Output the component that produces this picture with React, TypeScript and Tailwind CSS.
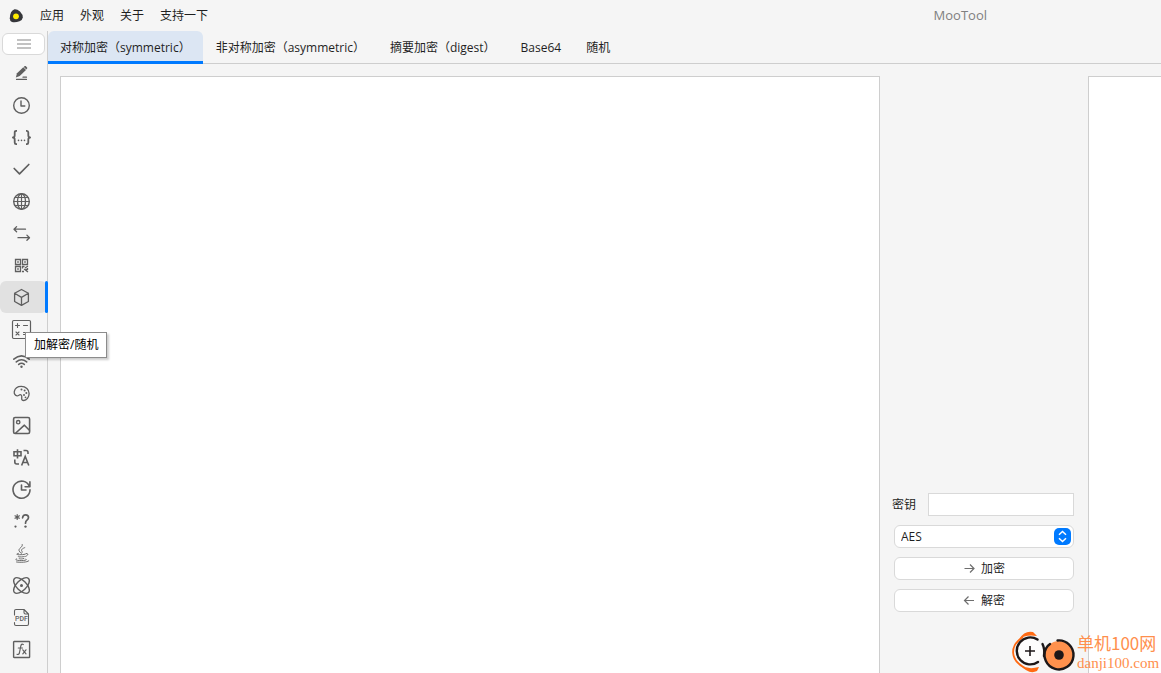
import React, { useState } from 'react';

type Tool = {
  id: string;
  label: string;
  icon: React.ReactNode;
};

const Icon: React.FC<{ children: React.ReactNode }> = ({ children }) => (
  <svg
    viewBox="0 0 20 20"
    className="size-5 overflow-visible"
    fill="none"
    stroke="currentColor"
    strokeWidth={1.4}
    strokeLinecap="round"
    strokeLinejoin="round"
    aria-hidden="true"
  >
    {children}
  </svg>
);

const tools: Tool[] = [
  {
    id: 'note',
    label: '随手记',
    icon: (
      <Icon>
        <path d="M4.8 14.4l1.2-4.1 6.3-6 2.7 2.8-6.3 6z" fill="currentColor" stroke="none" />
        <path d="M12.8 3.9l.9-.8q.5-.4 1 0l1.4 1.5q.4.5 0 1l-.8.8z" fill="currentColor" stroke="none" />
        <path d="M5.5 16.4h10M12 14.2h3.5" strokeWidth={1.2} />
      </Icon>
    ),
  },
  {
    id: 'time',
    label: '时间转换',
    icon: (
      <Icon>
        <circle cx="10.5" cy="10.5" r="7.8" />
        <path d="M10 6v5h3.8" />
      </Icon>
    ),
  },
  {
    id: 'json',
    label: 'JSON格式化',
    icon: (
      <Icon>
        <path
          d="M6 3.8H5.2q-1.5 0-1.5 1.6v2.9q0 2.2-1.8 2.2 1.8 0 1.8 2.2v2.9q0 1.6 1.5 1.6H6M15 3.8h.8q1.5 0 1.5 1.6v2.9q0 2.2 1.8 2.2-1.8 0-1.8 2.2v2.9q0 1.6-1.5 1.6H15"
          strokeWidth={1.8}
          strokeLinecap="butt"
        />
        <path d="M7.5 13.4h0M10.5 13.4h0M13.5 13.4h0" strokeWidth={1.6} />
      </Icon>
    ),
  },
  {
    id: 'host',
    label: 'Host',
    icon: (
      <Icon>
        <path d="M3.2 9.5l5.3 5.3 9.3-9.3" strokeWidth={1.7} />
      </Icon>
    ),
  },
  {
    id: 'http',
    label: 'HTTP请求',
    icon: (
      <Icon>
        <circle cx="10.5" cy="10.5" r="7.8" />
        <ellipse cx="10.5" cy="10.5" rx="4" ry="7.8" />
        <path d="M10.5 2.7v15.6M2.7 10.5h15.6M4 6.5h13M4 14.5h13" strokeWidth={1.2} />
      </Icon>
    ),
  },
  {
    id: 'encode',
    label: '编码转换',
    icon: (
      <Icon>
        <path d="M14.5 6.2H3M5.6 3.6L3 6.2l2.6 2.6M7 14.7h11.5M15.9 12.1l2.6 2.6-2.6 2.6" strokeWidth={1.3} />
      </Icon>
    ),
  },
  {
    id: 'qrcode',
    label: '二维码',
    icon: (
      <Icon>
        <g strokeLinejoin="miter" strokeLinecap="butt" strokeWidth={1.3}>
          <path d="M4.5 4.5h5v5h-5zM11.5 4.5h5v5h-5zM4.5 11.5h5v5h-5z" />
          <path d="M6.2 7h1.6M13.2 7h1.6M6.2 14h1.6" strokeWidth={1.6} />
          <path d="M11.5 10.9v2.6M11 11.5h2.5M14 13l3-2M13 14l4 3M11 16.5h2M16.5 13v2M14.5 14.5h2" />
        </g>
      </Icon>
    ),
  },
  {
    id: 'crypto',
    label: '加解密/随机',
    icon: (
      <Icon>
        <path d="M10.5 2.5l6.9 3.8v8.2l-6.9 3.9-6.9-3.9V6.3zM3.6 6.3l6.9 4.1 6.9-4.1M10.5 10.4v8" strokeWidth={1.3} />
      </Icon>
    ),
  },
  {
    id: 'calculator',
    label: '计算',
    icon: (
      <Icon>
        <rect x="1.5" y="1.5" width="18" height="18" rx="1.2" strokeWidth={1.2} />
        <path d="M4.5 6.5h4M6.5 4.5v4M12.5 6.5h4M5 13l3 3M8 13l-3 3M12.5 13.5h4M12.5 15.5h4" strokeWidth={1.1} />
      </Icon>
    ),
  },
  {
    id: 'net',
    label: '网络/IP',
    icon: (
      <Icon>
        <path d="M2.8 8.2q7.7-6.6 15.4 0M5.3 10.9q5.2-4.3 10.4 0M7.7 13.4q2.8-2.2 5.6 0" strokeWidth={1.6} />
        <circle cx="10.5" cy="15.7" r="1.2" fill="currentColor" stroke="none" />
      </Icon>
    ),
  },
  {
    id: 'color',
    label: '调色板',
    icon: (
      <Icon>
        <path
          d="M3.3 8.5C4 5 7 3.4 10.3 3.4c4.5 0 7.8 3.2 7.8 7 0 3.9-2.5 7.1-5.3 7.1-1.7 0-2.3-1.1-2.1-2.5.2-1.5.2-3.1-1.5-3.3-1-.1-1.6 1.3-3.1 1.2-2-.1-3.2-2.3-2.8-4.4z"
          strokeWidth={1.3}
        />
        <g fill="currentColor" stroke="none">
          <circle cx="10.5" cy="6.5" r="1" />
          <circle cx="13.6" cy="7.5" r="1" />
          <circle cx="15.3" cy="10" r="1" />
          <circle cx="13" cy="12" r="1" />
          <circle cx="14.5" cy="14.3" r=".9" />
        </g>
      </Icon>
    ),
  },
  {
    id: 'image',
    label: '图片助手',
    icon: (
      <Icon>
        <rect x="2.6" y="2.5" width="16" height="16" rx="1.5" strokeWidth={1.6} />
        <circle cx="7.2" cy="7.2" r="1.7" />
        <path d="M4.8 18l8.6-7.8 5 5" strokeWidth={1.6} />
      </Icon>
    ),
  },
  {
    id: 'translate',
    label: '翻译',
    icon: (
      <Icon>
        <g strokeWidth={1.6} strokeLinecap="butt" strokeLinejoin="miter">
          <path d="M3 4.7h7v4.1H3zM6.5 2.2v9.3" />
          <path d="M12.500 3.5h2.500q2 0 2 2v1.500M3.800 12.5v2.500q0 2 2 2h2.200" />
          <path d="M10.600 18.500l3.600-9 3.600 9M11.900 15.500h4.600" />
        </g>
      </Icon>
    ),
  },
  {
    id: 'cron',
    label: 'Cron表达式',
    icon: (
      <Icon>
        <path d="M18.4 7.5A8.5 8.5 0 1 0 19 10.9M18.900 2.9v4.9h-4.8" strokeWidth={1.6} />
        <path d="M10.5 6v5H15" strokeWidth={1.6} />
      </Icon>
    ),
  },
  {
    id: 'regex',
    label: '正则表达式',
    icon: (
      <Icon>
        <path d="M6.2 3.6v4.8M4 4.8l4.4 2.4M8.4 4.8L4 7.2" strokeWidth={1.2} />
        <circle cx="4.5" cy="15.6" r="1.1" fill="currentColor" stroke="none" />
        <path d="M11.6 6.8q.2-3 3-3 2.9 0 2.9 2.7 0 1.5-1.5 2.6-1.5 1.1-1.5 3.100" strokeWidth={1.7} />
        <circle cx="14.5" cy="15.6" r="1.2" fill="currentColor" stroke="none" />
      </Icon>
    ),
  },
  {
    id: 'java',
    label: 'Java',
    icon: (
      <Icon>
        <g strokeWidth={0.9}>
          <path d="M11.3 1.5c1 2.5-4.3 3.9-3.2 6.3.4.9 1.2 1.6 1.8 2.3M13.8 4.6c-2 .7-4 1.9-3 3.4.6.9.7 1.5-.2 2.2" />
          <path d="M7.4 10.4c-2.5.5-2.4 1.2 1 1.3 2.2.1 4.2-.1 5.8-.5M15 10.5c2.2-.6 3 1.5-.4 2.900M7.2 13.1c-1 .9 3.4 1.2 6.1.4M7.9 15.1c-.8 1 3 1.2 5 .4" />
          <path d="M5.7 15.9c-4.2 1.3 4.3 2.2 8.7 1.3 1.2-.3 1.3-.7.5-1M5.5 19c4.5.6 10.6.4 12.3-1.2" />
        </g>
      </Icon>
    ),
  },
  {
    id: 'reformat',
    label: '格式化',
    icon: (
      <Icon>
        <ellipse cx="10.5" cy="10.5" rx="9.9" ry="5" transform="rotate(45 10.5 10.5)" />
        <ellipse cx="10.5" cy="10.5" rx="9.9" ry="5" transform="rotate(-45 10.5 10.5)" />
        <circle cx="10.5" cy="10.5" r="1.5" fill="currentColor" stroke="none" />
      </Icon>
    ),
  },
  {
    id: 'pdf',
    label: 'PDF',
    icon: (
      <Icon>
        <path d="M3.5 8V4q0-1.5 1.5-1.5h8L17.5 7v10q0 1.5-1.5 1.5H5q-1.5 0-1.5-1.5v-1.5M13 2.5v3Q13 7 14.5 7h3" strokeWidth={1.1} />
        <text
          x="10.5"
          y="14"
          textAnchor="middle"
          fontFamily="Roboto, sans-serif"
          fontSize="7"
          fontWeight="500"
          fill="currentColor"
          stroke="none"
        >
          PDF
        </text>
      </Icon>
    ),
  },
  {
    id: 'variables',
    label: '变量',
    icon: (
      <Icon>
        <rect x="2.6" y="2.5" width="16" height="16" rx=".6" />
        <path d="M12.3 5.5q-2-1-2.5 1.5l-1.4 7q-.5 2-2.4 1.3M7.3 9h4.2M11.8 10.8l3.2 4M15 10.8l-3.2 4" strokeWidth={1.2} />
      </Icon>
    ),
  },
];

const menus = ['应用', '外观', '关于', '支持一下'];

const tabs = [
  '对称加密（symmetric）',
  '非对称加密（asymmetric）',
  '摘要加密（digest）',
  'Base64',
  '随机',
];

const Watermark: React.FC = () => (
  <div className="pointer-events-none absolute right-0 bottom-0 flex w-[150px] items-start text-[#ff8f4d]">
    <svg viewBox="0 0 66 44" className="h-11 w-[66px] shrink-0" fill="none" aria-hidden="true">
      <path d="M12 8C-2 17-1 31 14 39" stroke="#ff6a13" strokeWidth="1.8" />
      <path d="M8 10Q14 1 22 3L26 7Q15 5 8 10zM9 36Q18 46 26 42L28 38Q17 41 9 36z" fill="#ff6a13" />
      {/* left ring, open at the top right */}
      <circle cx="19" cy="22" r="12.5" fill="#fdfdfd" />
      <path d="M26.5 10.500A13.500 13.500 0 1 0 27 33" stroke="#1c1718" strokeWidth="2.4" strokeLinecap="round" />
      <path d="M19 17v10M14 22h10" stroke="#1c1718" strokeWidth="1.6" />
      {/* right disc */}
      <circle cx="48" cy="26" r="14" fill="#ff914d" />
      <path d="M46.500 11.500A14.500 14.500 0 1 1 35 19.500Q36.500 16.500 39 15" stroke="#1c1718" strokeWidth="2.4" strokeLinecap="round" />
      <path d="M31.500 15Q34 20 33 27" stroke="#1c1718" strokeWidth="2.4" strokeLinecap="round" />
      <circle cx="48" cy="26" r="4.800" fill="#1c1718" />
    </svg>
    <div className="pt-0.5 whitespace-nowrap">
      <div className="font-['Noto_Sans_CJK_SC',sans-serif] text-[17px] leading-6">单机100网</div>
      <div className="font-['Liberation_Serif',serif] text-[15px] leading-4">danji100.com</div>
    </div>
  </div>
);

export default function App() {
  const [activeTool, setActiveTool] = useState('crypto');
  const [activeTab, setActiveTab] = useState(0);

  return (
    <div className="relative flex h-screen flex-col overflow-hidden bg-[#f5f5f5] font-['Open_Sans','Noto_Sans_CJK_SC',sans-serif] text-[12px] leading-4 text-[#1f1f1f]">
      <header className="flex h-[31px] shrink-0 items-center">
        <svg viewBox="0 0 14 14" className="ml-[9px] size-[14px]" aria-hidden="true">
          <path d="M5.5.3Q8 0 11 2.5q3 3 2.8 6-.3 2.5-3.3 3.8-4 1.4-7.5.7Q.8 12.400.8 9.300 1 2 5.5.3z" fill="#35363a" />
          <circle cx="7" cy="7.3" r="2.9" fill="#ffec00" />
        </svg>
        <nav className="ml-[17px] flex gap-4">
          {menus.map((menu) => (
            <button key={menu}>{menu}</button>
          ))}
        </nav>
        <h1 className="mr-[174px] ml-auto pb-px text-[13px] text-[#808080]">MooTool</h1>
      </header>

      <div className="flex min-h-0 flex-1">
        <aside className="w-12 shrink-0 border-r border-[#cecece] pt-0.5">
          <button
            aria-label="菜单"
            className="mb-0.5 ml-0.5 flex h-[22px] w-[43px] items-center justify-center rounded-md border border-[#d9d9d9] bg-white text-[#afafaf]"
          >
            <svg viewBox="0 0 14 10" className="h-2.5 w-3.5" stroke="currentColor" strokeWidth="1.6" aria-hidden="true">
              <path d="M0 1h14M0 5h14M0 9h14" />
            </svg>
          </button>
          {tools.map((tool) => {
            const active = tool.id === activeTool;
            return (
              <div key={tool.id} className="relative">
                <button
                  aria-label={tool.label}
                  onClick={() => setActiveTool(tool.id)}
                  className={`flex h-8 w-[47px] items-center rounded-md pl-[11px] text-[#5f5f5f] ${
                    active ? 'bg-[#e1e1e1]' : ''
                  }`}
                >
                  {tool.icon}
                </button>
                {active && (
                  <>
                    <span className="absolute top-0 -right-px h-8 w-[3px] rounded-xs bg-[#007aff]" />
                    <span
                      role="tooltip"
                      className="absolute top-[51px] left-[25px] z-10 border border-[#8c8c8c] bg-white px-2 py-1 whitespace-nowrap text-black shadow-[2px_2px_2px_rgba(0,0,0,0.2)]"
                    >
                      {tool.label}
                    </span>
                  </>
                )}
              </div>
            );
          })}
        </aside>

        <main className="flex min-w-0 flex-1 flex-col">
          <div role="tablist" className="flex h-[33px] shrink-0 gap-px border-b border-[#cecece]">
            {tabs.map((tab, i) => (
              <button
                key={tab}
                role="tab"
                aria-selected={i === activeTab}
                onClick={() => setActiveTab(i)}
                className={`h-[33px] shrink-0 border-b-[3px] px-3 pt-1 whitespace-nowrap ${
                  i === activeTab ? 'rounded-t-md border-[#007aff] bg-[#dce6f3]' : 'border-transparent'
                }`}
              >
                {tab}
              </button>
            ))}
          </div>

          <div className="flex min-h-0 flex-1 pt-3 pl-3">
            <div className="flex min-w-0 grow-[820] basis-0">
              <textarea
                aria-label="明文"
                className="w-full resize-none border border-b-0 border-[#cecece] bg-white p-1 outline-none"
              />
            </div>
            <form className="flex w-52 shrink-0 flex-col gap-[9px] px-3.5 pt-[417px]">
              <div className="-ml-0.5 flex items-center">
                <label htmlFor="key" className="shrink-0">密钥</label>
                <input id="key" className="ml-3 h-[23px] min-w-0 flex-1 border border-[#d9d9d9] bg-white px-1.5 outline-none" />
              </div>
              <div className="relative">
                <select
                  aria-label="算法"
                  className="block h-[23px] w-full appearance-none rounded-md border border-[#d9d9d9] bg-white px-1.5 outline-none"
                >
                  <option>AES</option>
                  <option>DES</option>
                  <option>SM4</option>
                </select>
                <span className="pointer-events-none absolute top-[3px] right-[3px] flex size-[17px] items-center justify-center rounded-[5px] bg-[#007aff]">
                  <svg viewBox="0 0 17 17" className="size-[17px]" fill="none" stroke="#fff" strokeWidth="1.5" aria-hidden="true">
                    <path d="M5 6.8l3.5-3.3L12 6.8M5 10.2l3.5 3.3 3.5-3.3" />
                  </svg>
                </span>
              </div>
              <button type="button" className="flex h-[23px] items-center justify-center gap-1.5 rounded-md border border-[#d9d9d9] bg-white">
                <svg viewBox="0 0 12 12" className="size-3" fill="none" stroke="#6e6e6e" strokeWidth="1.2" aria-hidden="true">
                  <path d="M1.5 5.5H11M7 1.500l4 4-4 4" />
                </svg>
                加密
              </button>
              <button type="button" className="flex h-[23px] items-center justify-center gap-1.5 rounded-md border border-[#d9d9d9] bg-white">
                <svg viewBox="0 0 12 12" className="size-3" fill="none" stroke="#6e6e6e" strokeWidth="1.2" aria-hidden="true">
                  <path d="M11 5.5H1.500M5.500 1.500l-4 4 4 4" />
                </svg>
                解密
              </button>
            </form>
            <div className="flex min-w-0 grow-[73] basis-0">
              <textarea
                aria-label="密文"
                className="w-full resize-none border border-r-0 border-b-0 border-[#cecece] bg-white p-1 outline-none"
              />
            </div>
          </div>
        </main>
      </div>

      <Watermark />
    </div>
  );
}
